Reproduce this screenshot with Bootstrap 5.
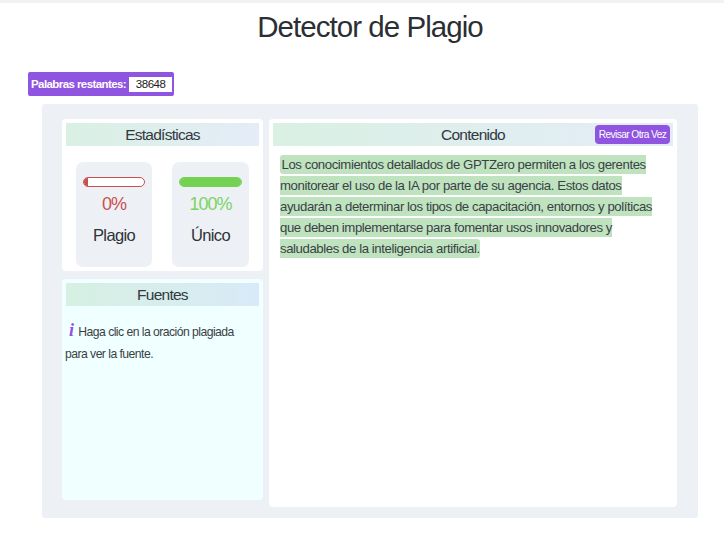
<!DOCTYPE html>
<html lang="es">
<head>
<meta charset="utf-8">
<title>Detector de Plagio</title>
<link href="https://cdn.jsdelivr.net/npm/bootstrap@5.3.0/dist/css/bootstrap.min.css" rel="stylesheet">
<style>
html,body{height:536px;overflow:hidden;background:#fff;}
body{font-family:"Liberation Sans",Arial,sans-serif;color:#212529;}
.topline{height:3px;background:#f2f2f2;}
.page-title{font-size:29.5px;line-height:34px;font-weight:400;text-align:center;letter-spacing:-.95px;margin:7px 0 0;padding-left:16px;height:62px;color:#2b2f33;}
.words-box{margin-left:28px;width:146px;height:24px;background:#8f54e0;border-radius:2px;padding:1px 3px 0 3px;color:#fff;font-weight:700;font-size:11.5px;letter-spacing:-.58px;white-space:nowrap;}
.words-val{flex:0 0 43px;height:15px;margin-left:3px;background:#fff;color:#222;font-weight:400;font-size:11.5px;letter-spacing:-.5px;line-height:15px;text-align:center;}
.panel-main{margin:8px 26px 0 42px;height:414px;background:#edf1f6;border-radius:3px;padding:15px 21px 0 20px;gap:6px;}
.col-left{flex:0 0 201px;gap:8px;}
.box-white{background:#fff;border-radius:4px;padding:4px;}
.box-stats{height:152px;}
.box-src{height:221px;background:#f0ffff;}
.box-content{flex:0 0 408px;height:388px;}
.head-bar{height:23px;line-height:23px;font-size:15.5px;letter-spacing:-.75px;text-align:center;color:#33393f;background:linear-gradient(100deg,#d9f0e3,#e4ecf8);position:relative;}
.head-bar.src-head{background:linear-gradient(100deg,#d6f0e2,#d8eaf8);}
.stat-row{padding:16px 10px 0 10px;gap:20px;}
.stat-tile{flex:0 0 76px;height:105px;background:#edf1f6;border-radius:7px;padding:15px 7px 0;text-align:center;}
.stat-tile.wide{flex-basis:77px;}
.meter{height:10px;border-radius:5px;border:1px solid #c9504f;background:#fff;overflow:hidden;}
.meter-fill{height:100%;background:#c9504f;}
.meter.ok{border-color:#74d152;}
.meter.ok .meter-fill{background:#74d152;}
.pct{font-size:18px;line-height:22px;letter-spacing:-1px;margin-top:6px;color:#c9504f;}
.pct.ok{color:#7bd460;}
.stat-name{font-size:16.5px;line-height:20px;letter-spacing:-.65px;margin-top:10px;color:#2d3338;}
.src-note{font-size:12.2px;line-height:22px;letter-spacing:-.54px;margin:15px 0 0 -1px;color:#3a3f44;}
.info-i{font-family:"Liberation Serif",serif;font-style:italic;font-weight:700;font-size:18px;line-height:18px;color:#8f54e0;margin:0 2px 0 4px;}
.again-btn{position:absolute;right:3px;top:2px;width:75px;height:19px;padding:0;line-height:19px;font-size:10.2px;letter-spacing:-.6px;color:#fff;background:#8f54e0;border:0;border-radius:4px;white-space:nowrap;}
.body-text{font-size:13.2px;line-height:21px;letter-spacing:-.42px;margin:8px 0 0 7px;width:380px;color:#3a4146;}
.hl{background:#bfe3bf;border-radius:3px;padding:2px 0 2px 1.5px;}
</style>
</head>
<body>
<div class="topline"></div>
<h1 class="page-title">Detector de Plagio</h1>
<div class="words-box d-flex align-items-center">
  <span>Palabras restantes:</span><span class="words-val">38648</span>
</div>
<div class="panel-main d-flex align-items-start">
  <div class="col-left d-flex flex-column">
    <div class="box-white box-stats">
      <div class="head-bar">Estadísticas</div>
      <div class="stat-row d-flex">
        <div class="stat-tile">
          <div class="meter"><div class="meter-fill" style="width:6%"></div></div>
          <div class="pct">0%</div>
          <div class="stat-name">Plagio</div>
        </div>
        <div class="stat-tile wide">
          <div class="meter ok"><div class="meter-fill" style="width:100%"></div></div>
          <div class="pct ok">100%</div>
          <div class="stat-name">Único</div>
        </div>
      </div>
    </div>
    <div class="box-white box-src">
      <div class="head-bar src-head">Fuentes</div>
      <div class="src-note"><span class="info-i">i</span> Haga clic en la oración plagiada<br>para ver la fuente.</div>
    </div>
  </div>
  <div class="box-white box-content">
    <div class="head-bar">Contenido<button type="button" class="again-btn">Revisar Otra Vez</button></div>
    <div class="body-text"><span class="hl">Los conocimientos detallados de GPTZero permiten a los gerentes monitorear el uso de la IA por parte de su agencia. Estos datos ayudarán a determinar los tipos de capacitación, entornos y políticas que deben implementarse para fomentar usos innovadores y saludables de la inteligencia artificial.</span></div>
  </div>
</div>
<script src="https://cdn.jsdelivr.net/npm/bootstrap@5.3.0/dist/js/bootstrap.bundle.min.js"></script>
</body>
</html>
